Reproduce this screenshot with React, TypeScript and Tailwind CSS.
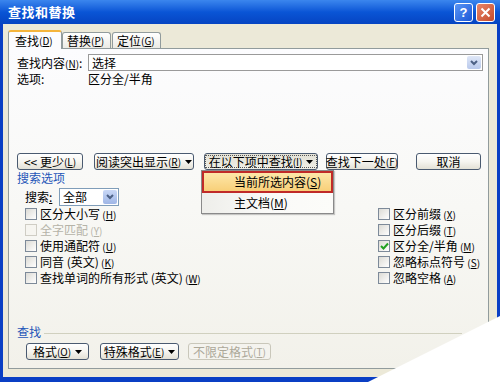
import React from 'react';

const font = { fontFamily: '"Noto Sans CJK SC", "Liberation Sans", sans-serif' };

const Key: React.FC<{ k: string; gap?: boolean }> = ({ k, gap }) => (
  <span className="text-[10px]">{gap ? ' ' : ''}(<span className="underline">{k}</span>)</span>
);

const Caret = () => (
  <svg width="7" height="4" viewBox="0 0 7 4" className="ml-[4px] shrink-0">
    <path d="M0 0 L7 0 L3.5 4 Z" fill="#000" />
  </svg>
);

const Chevron = () => (
  <svg width="8" height="6" viewBox="0 0 8 6">
    <path d="M1 1 L4 4 L7 1" stroke="#4d6185" strokeWidth="2" fill="none" />
  </svg>
);

interface BtnProps {
  children: React.ReactNode;
  className?: string;
  disabled?: boolean;
  pressed?: boolean;
}
const Btn: React.FC<BtnProps> = ({ children, className, disabled, pressed }) => (
  <div
    className={`flex items-center justify-center h-[17px] rounded-[3px] border text-[12px] leading-none whitespace-nowrap shrink-0 ${
      disabled
        ? 'border-[#c9c7ba] text-[#aca899] bg-[#f4f3ee]'
        : pressed
          ? 'border-[#4a5a70] bg-gradient-to-b from-[#e3e1d6] to-[#efeee6] text-black'
          : 'border-[#4a5a70] bg-gradient-to-b from-[#ffffff] via-[#f6f5f0] to-[#e3e1d6] text-black'
    } ${className}`}
  >
    {pressed ? (
      <div className="flex items-center justify-center border border-dotted border-[#555] px-[3px] h-[13px] whitespace-nowrap">{children}</div>
    ) : (
      children
    )}
  </div>
);

const Check: React.FC<{ label: string; k: string; checked?: boolean; disabled?: boolean }> = ({ label, k, checked, disabled }) => (
  <div className={`flex items-center h-[16px] whitespace-nowrap ${disabled ? 'text-[#b5b3a8]' : 'text-black'}`}>
    <div
      className={`w-[12px] h-[12px] shrink-0 border flex items-center justify-center ${
        disabled ? 'border-[#cfcdc4] bg-[#f6f5f0]' : 'border-[#7d8a99] bg-gradient-to-br from-[#dcdbd5] to-[#ffffff]'
      }`}
    >
      {checked && (
        <svg width="9" height="8" viewBox="0 0 9 8">
          <path d="M1 4 L3.5 6.5 L8 1.5" stroke="#21a121" strokeWidth="2" fill="none" />
        </svg>
      )}
    </div>
    <span className="ml-[3px] text-[12px] leading-none">
      {label}
      <Key k={k} gap />
    </span>
  </div>
);

export default function App() {
  return (
    <div className="relative w-[500px] h-[382px] overflow-hidden bg-[#0a3fc4] flex flex-col select-none" style={font}>
      {/* title bar */}
      <div className="h-[24px] flex items-center bg-gradient-to-b from-[#3b86ee] via-[#0a55d6] to-[#0644c2] pl-[8px] pr-[5px]">
        <span className="text-white font-bold text-[13px] tracking-[0.5px]">查找和替换</span>
        <div className="ml-auto flex gap-[3px]">
          <div className="w-[19px] h-[19px] rounded-[3px] border border-white bg-gradient-to-br from-[#5a95f5] to-[#1b56d6] flex items-center justify-center text-white font-bold text-[13px] leading-none" style={{ fontFamily: '"Liberation Sans", sans-serif' }}>
            ?
          </div>
          <div className="w-[19px] h-[19px] rounded-[3px] border border-white bg-gradient-to-br from-[#e8866a] to-[#c44a2a] flex items-center justify-center">
            <svg width="11" height="11" viewBox="0 0 11 11">
              <path d="M1.5 1.5 L9.5 9.5 M9.5 1.5 L1.5 9.5" stroke="#fff" strokeWidth="2" />
            </svg>
          </div>
        </div>
      </div>

      {/* body */}
      <div className="flex-1 mx-[3px] mb-[5px] bg-[#ece9d8] flex flex-col px-[5px] pt-[5px]">
        {/* tabs */}
        <div className="flex items-end h-[19px] text-[12px] whitespace-nowrap">
          <div className="h-[19px] w-[54px] bg-[#fcfcfe] border border-b-0 border-[#919b9c] border-t-[2px] border-t-[#f5b53c] rounded-t-[3px] flex items-center pl-[6px] relative z-10 -mb-[1px]">
            查找<Key k="D" />
          </div>
          <div className="h-[16px] w-[49px] bg-gradient-to-b from-white to-[#ecebe5] border border-b-0 border-[#919b9c] rounded-t-[3px] flex items-center pl-[4px]">
            替换<Key k="P" gap />
          </div>
          <div className="h-[16px] w-[49px] ml-[1px] bg-gradient-to-b from-white to-[#ecebe5] border border-b-0 border-[#919b9c] rounded-t-[3px] flex items-center pl-[4px]">
            定位<Key k="G" gap />
          </div>
        </div>

        {/* panel */}
        <div className="w-[481px] h-[321px] border border-[#919b9c] bg-gradient-to-b from-[#fcfcfe] via-[#f8f8f5] to-[#f2f1ea] flex flex-col pl-[8px] text-[12px] leading-none">
          <div className="flex items-center h-[17px] mt-[5px] whitespace-nowrap">
            <span className="w-[71px]">
              查找内容<Key k="N" />:
            </span>
            <div className="w-[395px] h-[17px] border border-[#9a9a9a] bg-white flex items-center pl-[3px]">
              <span>选择</span>
              <div className="ml-auto mr-[1px] w-[14px] h-[13px] rounded-[2px] bg-gradient-to-b from-[#dfe7f7] to-[#b9c9ec] flex items-center justify-center">
                <Chevron />
              </div>
            </div>
          </div>
          <div className="flex items-center h-[16px]">
            <span className="w-[71px]">选项:</span>
            <span>区分全/半角</span>
          </div>

          {/* buttons */}
          <div className="flex items-center mt-[66px] h-[17px]">
            <Btn className="w-[66px]">
              &lt;&lt; 更少<Key k="L" />
            </Btn>
            <Btn className="w-[100px] ml-[11px]">
              阅读突出显示<Key k="R" />
              <Caret />
            </Btn>
            <Btn className="w-[114px] ml-[10px]" pressed>
              在以下项中查找<Key k="I" gap />
              <Caret />
            </Btn>
            <Btn className="w-[72px] ml-[8px]">
              查找下一处<Key k="F" />
            </Btn>
            <Btn className="w-[65px] ml-[18px]">取消</Btn>
          </div>

          <div className="h-[16px] flex items-center text-[#1f56b8]">搜索选项</div>

          {/* options */}
          <div className="flex">
            <div className="ml-[8px] w-[353px] flex flex-col">
              <div className="flex items-center h-[18px] mt-[2px]">
                <span className="w-[34px]">
                  搜索<span className="underline">:</span>
                </span>
                <div className="w-[60px] h-[18px] border border-[#7f9db9] bg-white flex items-center pl-[3px]">
                  <span>全部</span>
                  <div className="ml-auto mr-[1px] w-[14px] h-[14px] rounded-[2px] bg-gradient-to-b from-[#c9d8f6] to-[#9fb6e6] flex items-center justify-center">
                    <Chevron />
                  </div>
                </div>
              </div>
              <Check label="区分大小写" k="H" />
              <Check label="全字匹配" k="Y" disabled />
              <Check label="使用通配符" k="U" />
              <Check label="同音 (英文)" k="K" />
              <Check label="查找单词的所有形式 (英文)" k="W" />
            </div>
            <div className="flex flex-col mt-[20px]">
              <Check label="区分前缀" k="X" />
              <Check label="区分后缀" k="T" />
              <Check label="区分全/半角" k="M" checked />
              <Check label="忽略标点符号" k="S" />
              <Check label="忽略空格" k="A" />
            </div>
          </div>

          {/* find section */}
          <div className="flex items-center h-[16px] mt-[38px] pr-[26px]">
            <span className="text-[#1f56b8]">查找</span>
            <div className="flex-1 ml-[3px] border-t border-[#d0d0bf] mt-[2px]" />
          </div>
          <div className="flex items-center h-[17px] mt-[3px] ml-[9px]">
            <Btn className="w-[63px]">
              格式<Key k="O" gap />
              <Caret />
            </Btn>
            <Btn className="w-[79px] ml-[11px]">
              特殊格式<Key k="E" gap />
              <Caret />
            </Btn>
            <Btn className="w-[83px] ml-[9px]" disabled>
              不限定格式<Key k="T" gap />
            </Btn>
          </div>
        </div>
      </div>

      {/* dropdown menu */}
      <div className="absolute left-[201px] top-[170px] w-[133px] h-[44px] bg-[#fcfcf9] border border-[#8a8a8a] shadow-[1px_1px_1px_rgba(0,0,0,0.2)] text-[12px] leading-none whitespace-nowrap">
        <div className="h-[22px] border-[2px] border-[#c02a28] bg-gradient-to-b from-[#fde7a8] to-[#f8cf78] flex items-center pl-[30px]">
          当前所选内容<span>(<span className="underline">S</span>)</span>
        </div>
        <div className="h-[20px] flex items-center pl-[32px] bg-gradient-to-r from-[#eeeeea] via-[#fafaf8] to-[#fcfcf9]">
          主文档<span>(<span className="underline">M</span>)</span>
        </div>
      </div>

      {/* white corner */}
      <svg className="absolute right-0 bottom-0" width="132" height="66" viewBox="0 0 132 66">
        <polygon points="132,0 132,66 0,66" fill="#ffffff" />
      </svg>
    </div>
  );
}
